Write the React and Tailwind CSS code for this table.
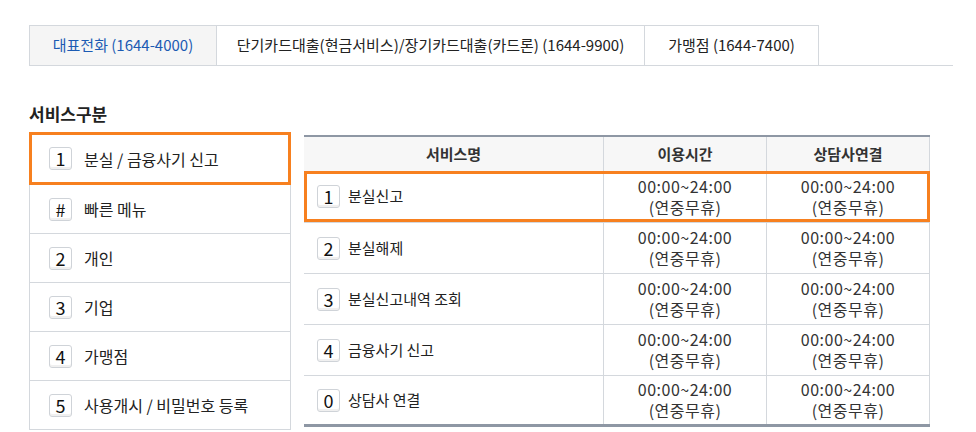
const tabs = [
  { label: '대표전화 (1644-4000)', w: 'w-[188px]', active: true },
  { label: '단기카드대출(현금서비스)/장기카드대출(카드론) (1644-9900)', w: 'w-[429px]' },
  { label: '가맹점 (1644-7400)', w: 'w-[175px]' },
];

const menu = [
  { key: '1', label: '분실 / 금융사기 신고' },
  { key: '#', label: '빠른 메뉴' },
  { key: '2', label: '개인' },
  { key: '3', label: '기업' },
  { key: '4', label: '가맹점' },
  { key: '5', label: '사용개시 / 비밀번호 등록' },
];

const services = [
  { key: '1', name: '분실신고' },
  { key: '2', name: '분실해제' },
  { key: '3', name: '분실신고내역 조회' },
  { key: '4', name: '금융사기 신고' },
  { key: '0', name: '상담사 연결' },
];

function Key({ children }) {
  return (
    <span className="flex h-[23px] w-[23px] shrink-0 items-center justify-center rounded-[3px] border border-[#cfd3d8] bg-white pb-px text-[18px] leading-none text-[#111] shadow-[inset_0_-2px_0_#f0f0f0]">
      {children}
    </span>
  );
}

function Hours() {
  return (
    <div className="text-center text-[16px] leading-[21px] tracking-[0.5px] text-[#333]">
      <div>00:00~24:00</div>
      <div>(연중무휴)</div>
    </div>
  );
}

export default function App() {
  return (
    <div className="h-[432px] w-[976px] overflow-hidden bg-white pl-[29px] pt-[25px] font-['Noto_Sans_CJK_KR','Noto_Sans',sans-serif] text-[#222]">
      {/* tabs */}
      <div className="flex w-[924px] border-b border-[#d4d8dd]">
        {tabs.map((t) => (
          <div
            key={t.label}
            className={`${t.w} -mr-px flex h-[40px] items-center justify-center border border-b-0 border-[#d4d8dd] text-[15px] ${
              t.active ? 'bg-[#f5f5f5] text-[#1c5bb3]' : 'bg-white text-[#222]'
            }`}
          >
            {t.label}
          </div>
        ))}
      </div>

      <h3 className="mt-[37px] text-[17px] font-bold leading-[22px] text-[#222]">서비스구분</h3>

      <div className="mt-[7px] flex gap-[13px]">
        {/* left menu */}
        <div className="w-[262px] shrink-0">
          {menu.map((m, i) => (
            <div
              key={m.key}
              className={
                i === 0
                  ? 'flex h-[53px] items-center gap-[12px] border-[3px] border-[#f7801f] pl-[17px] text-[16px]'
                  : 'flex h-[49px] items-center gap-[12px] border-x border-b border-[#d4d8dd] pl-[19px] text-[16px]'
              }
            >
              <Key>{m.key}</Key>
              <span>{m.label}</span>
            </div>
          ))}
        </div>

        {/* table */}
        <div className="mt-[3px] w-[626px] shrink-0">
          <div className="flex h-[36px] border-t-2 border-[#8e97a4] bg-[#f7f7f7] text-[15px] font-bold text-[#333]">
            <div className="flex w-[300px] items-center justify-center border-r border-[#d4d8dd]">서비스명</div>
            <div className="flex w-[163px] items-center justify-center border-r border-[#d4d8dd]">이용시간</div>
            <div className="flex flex-1 items-center justify-center border-r border-[#d4d8dd]">상담사연결</div>
          </div>
          {services.map((s, i) => (
            <div
              key={s.key}
              className={`relative flex ${i === 0 ? 'h-[52px]' : 'h-[51px]'} ${
                i === services.length - 1 ? 'border-b-[3px] border-[#8e97a4]' : 'border-b border-[#d4d8dd]'
              }`}
            >
              <div className="flex w-[300px] items-center gap-[8px] border-r border-[#d4d8dd] pl-[13px] text-[15px]">
                <Key>{s.key}</Key>
                <span>{s.name}</span>
              </div>
              <div className="flex w-[163px] items-center justify-center border-r border-[#d4d8dd]">
                <Hours />
              </div>
              <div className="flex flex-1 items-center justify-center border-r border-[#d4d8dd]">
                <Hours />
              </div>
              {i === 0 && <div className="pointer-events-none absolute inset-0 border-[3px] border-[#f7801f]" />}
            </div>
          ))}
        </div>
      </div>
    </div>
  );
}
